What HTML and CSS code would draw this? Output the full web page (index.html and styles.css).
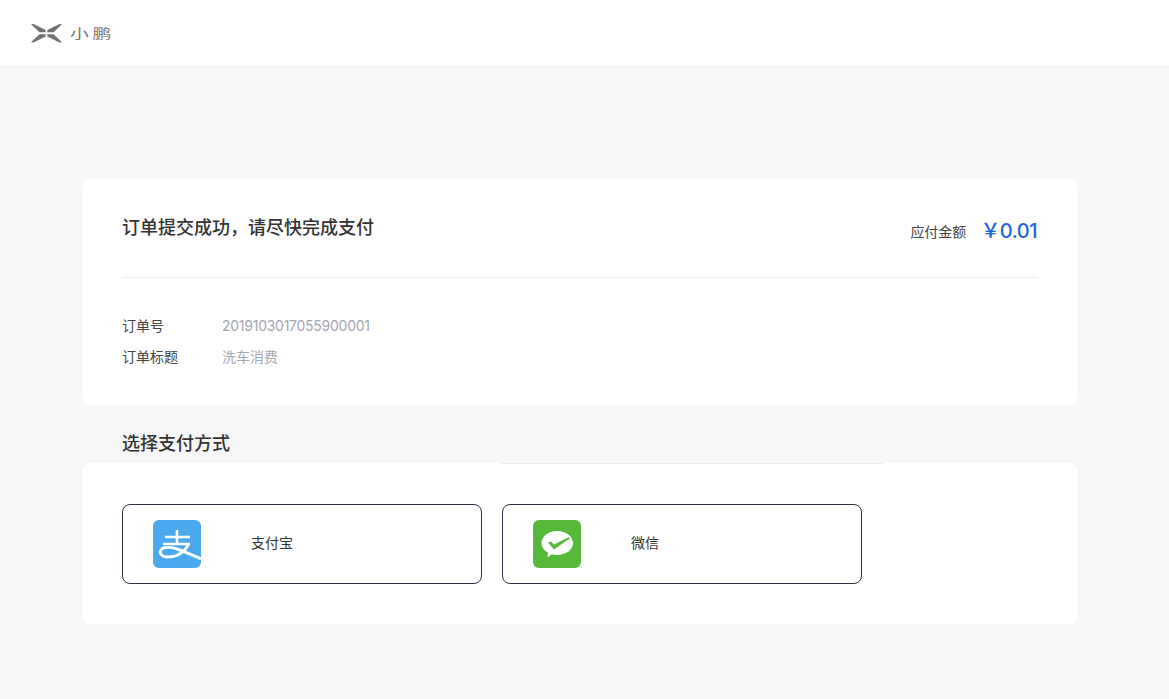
FILE: index.html
```html
<!DOCTYPE html>
<html lang="zh-CN">
<head>
<meta charset="utf-8">
<title>小鹏</title>
<link rel="stylesheet" href="styles.css">
</head>
<body>
<header class="topbar">
  <svg class="logo-mark" width="34" height="20" viewBox="0 0 34 20"><path fill="#717274" d="M1 1.200L3.500 1L15.700 7V9.200H9.500ZM9.500 11.200H15.700V13.500L3.500 19.500L1 19.200ZM32 1.200L29.500 1L17.300 7V9.200H23.500ZM23.500 11.200H17.300V13.500L29.500 19.500L32 19.200Z"/></svg>
  <span class="logo-text">小鹏</span>
</header>
<main class="page">
  <section class="card order">
    <div class="order-head">
      <h1 class="order-title">订单提交成功，请尽快完成支付</h1>
      <div class="amount"><span class="amount-label">应付金额</span><span class="amount-value">￥0.01</span></div>
    </div>
    <dl class="details">
      <div class="detail-row"><dt>订单号</dt><dd class="order-no">2019103017055900001</dd></div>
      <div class="detail-row"><dt>订单标题</dt><dd>洗车消费</dd></div>
    </dl>
  </section>
  <h2 class="section-title">选择支付方式</h2>
  <section class="card methods">
    <span class="hairline"></span>
    <div class="method">
      <svg class="method-icon" width="48" height="48" viewBox="0 0 48 48">
        <rect width="48" height="48" rx="6" fill="#4aa9ee"/>
        <path fill="none" stroke="#fff" stroke-width="2.6" d="M12 17H37M24 10V23M10 24H37"/>
        <path fill="none" stroke="#fff" stroke-width="3" d="M35.500 24C32 32 24 37 15 37C8.500 37 6 33 8 30C11 26 20 27 27 30C34 33 41 35.500 48 39"/>
      </svg>
      <span class="method-name">支付宝</span>
    </div>
    <div class="method">
      <svg class="method-icon" width="48" height="48" viewBox="0 0 48 48">
        <rect width="48" height="48" rx="6" fill="#57b83a"/>
        <path fill="#fff" d="M24 11C33 11 40 16.500 40 23C40 30 33 35 24 35C21.800 35 20 34.700 18.500 34.200L14.500 37.500L15 32.500C11 30.500 8.500 27 8.500 23C8.500 16.500 15.500 11 24 11Z"/>
        <path fill="#57b83a" d="M15 22.500L18 21.500L21 24.500L36 17L37 18.200L21 29.500Z"/>
      </svg>
      <span class="method-name">微信</span>
    </div>
  </section>
</main>
</body>
</html>
```
FILE: styles.css
```css
* { box-sizing: border-box; }
html, body { margin: 0; padding: 0; }
body {
  height: 699px;
  overflow: hidden;
  background: #f6f6f6;
  color: #333;
  font-family: Inter, "Noto Sans CJK SC", sans-serif;
}
.topbar {
  height: 67px;
  background: #fff;
  border-bottom: 1px solid #f0f0f0;
  display: flex;
  align-items: center;
  padding: 0 0 1px 30px;
  gap: 6px;
}
.logo-text {
  color: #77787a;
  font-size: 13px;
  letter-spacing: 2.6px;
  line-height: 20px;
  transform: scaleX(1.45);
  transform-origin: left center;
}
.page {
  width: 996px;
  margin: 112px 0 0 82px;
}
.card {
  background: #fff;
  border-radius: 8px;
  padding: 0 40px;
}
.order { height: 226px; padding-top: 36px; }
.order-head {
  display: flex;
  justify-content: space-between;
  height: 63px;
  border-bottom: 1px solid #ececec;
}
.order-title {
  margin: 0;
  font-size: 18px;
  line-height: 26px;
  font-weight: 500;
  color: #333;
}
.amount { display: flex; align-items: center; height: 30px; }
.amount-label { font-size: 14px; color: #444; margin-top: 1px; }
.amount-value {
  font-size: 20px;
  font-weight: 500;
  color: #2165dc;
  margin-left: 14px;
  margin-right: 1px;
  margin-bottom: 2px;
  letter-spacing: -0.5px;
}
.details { margin: 33px 0 0; }
.detail-row { display: flex; height: 31px; line-height: 30px; font-size: 14px; }
.detail-row dt { width: 100px; color: #444; }
.detail-row dd { margin: 0; color: #a4a6b3; }
.detail-row .order-no { letter-spacing: -0.26px; }
.section-title {
  margin: 0;
  height: 58px;
  padding: 26px 0 0 40px;
  font-size: 18px;
  line-height: 26px;
  font-weight: 500;
  color: #333;
}
.methods {
  position: relative;
  height: 161px;
  padding-top: 41px;
  display: flex;
  gap: 20px;
}
.hairline {
  position: absolute;
  left: 420px;
  top: 0;
  width: 380px;
  height: 1px;
  background: #ececec;
}
.method {
  width: 360px;
  height: 80px;
  border: 1px solid #2c3042;
  border-radius: 8px;
  display: flex;
  align-items: center;
  padding-left: 30px;
}
.method-name { margin-left: 50px; margin-bottom: 4px; font-size: 14px; color: #333; }
```
